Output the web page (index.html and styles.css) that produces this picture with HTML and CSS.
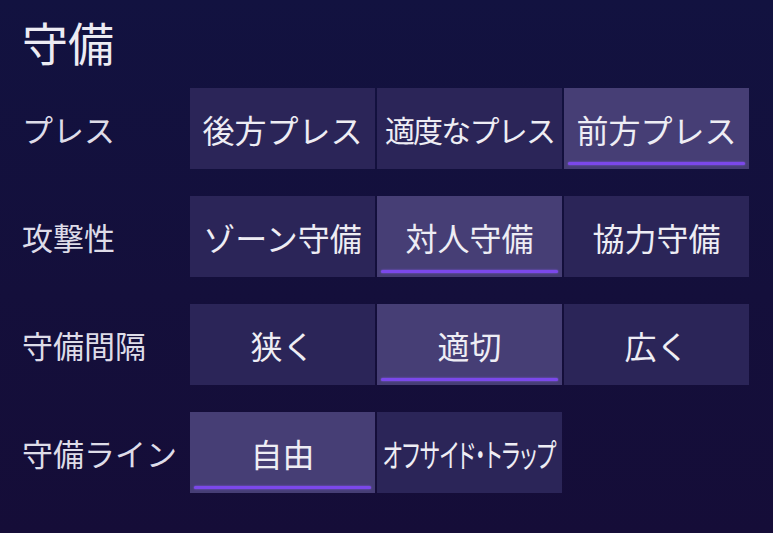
FILE: index.html
```html
<!DOCTYPE html>
<html lang="ja">
<head>
  <meta charset="UTF-8">
  <title>守備</title>
  <link rel="stylesheet" href="styles.css">
</head>
<body>
  <div class="panel">
    <h1 class="title">守備</h1>

    <div class="row">
      <div class="label">プレス</div>
      <div class="options">
        <button class="opt">後方プレス</button>
        <button class="opt small">適度なプレス</button>
        <button class="opt active">前方プレス</button>
      </div>
    </div>

    <div class="row">
      <div class="label">攻撃性</div>
      <div class="options">
        <button class="opt">ゾーン守備</button>
        <button class="opt active">対人守備</button>
        <button class="opt">協力守備</button>
      </div>
    </div>

    <div class="row">
      <div class="label">守備間隔</div>
      <div class="options">
        <button class="opt">狭く</button>
        <button class="opt active">適切</button>
        <button class="opt">広く</button>
      </div>
    </div>

    <div class="row">
      <div class="label">守備ライン</div>
      <div class="options">
        <button class="opt active">自由</button>
        <button class="opt"><span class="squeeze">オフサイド・トラップ</span></button>
      </div>
    </div>
  </div>
</body>
</html>
```

FILE: styles.css
```css
html, body { margin: 0; height: 100%; }
body {
  background: linear-gradient(180deg, #121240 0%, #140f3b 55%, #150d38 100%);
  font-family: "Noto Sans CJK JP", "Noto Sans", sans-serif;
  color: #ecebf3;
}
.panel {
  padding: 18px 0 0 22px;
}
.title {
  margin: 0 0 24px;
  font-size: 46px;
  font-weight: 400;
  line-height: 46px;
  height: 46px;
}
.row {
  display: flex;
  align-items: center;
  height: 81px;
  margin-bottom: 27px;
}
.label {
  width: 168px;
  font-size: 31px;
  color: #dedce8;
  line-height: 1;
}
.options {
  display: flex;
  gap: 2px;
  height: 100%;
}
.opt {
  position: relative;
  width: 185px;
  height: 81px;
  padding: 0;
  border: none;
  background: #2b2558;
  color: #eeedf4;
  font-family: inherit;
  font-size: 32px;
  line-height: 1;
  white-space: nowrap;
  overflow: hidden;
}
.opt.small {
  font-size: 30px;
  letter-spacing: -1.8px;
}
.opt.active {
  background: #463e75;
}
.opt.active::after {
  content: "";
  position: absolute;
  left: 4px;
  right: 4px;
  bottom: 4px;
  height: 3px;
  border-radius: 2px;
  background: #7b48ea;
  box-shadow: 0 0 2px #8a5cf0;
}
.squeeze {
  display: inline-block;
  font-size: 32px;
  font-feature-settings: "palt";
  transform: scaleX(0.66);
  margin: 0 -60px;
}
```
